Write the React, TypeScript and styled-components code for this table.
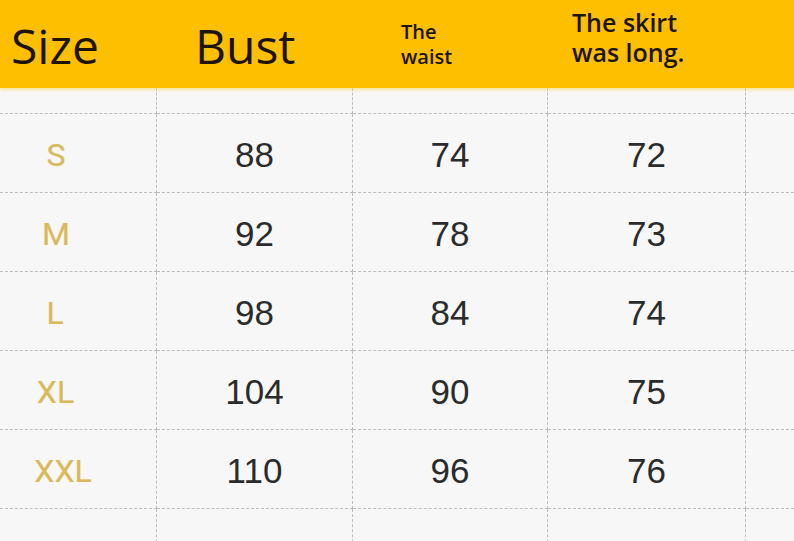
import styled, { createGlobalStyle } from 'styled-components';

const GlobalStyle = createGlobalStyle`
    html, body {
        margin: 0;
        padding: 0;
        background: #f7f7f7;
    }
    * {
        box-sizing: border-box;
    }
`;

const COLUMNS = '157px 196px 195px 198px 1fr';
const LINE = '1px dashed #bdbdbd';

const Page = styled.div`
    width: 794px;
    height: 541px;
    overflow: hidden;
    background: #f7f7f7;
`;

const Header = styled.div`
    display: grid;
    grid-template-columns: ${COLUMNS};
    height: 88px;
    background: #fdbf00;
    box-shadow: 0 2px 3px rgba(253, 214, 90, 0.6);
    position: relative;
    z-index: 1;
`;

const HeaderCell = styled.div<{ $indent: number; $top: number; $size: number; $lineHeight: number; $weight: number }>`
    padding-left: ${p => p.$indent}px;
    padding-top: ${p => p.$top}px;
    font-family: "Open Sans", "Noto Sans", sans-serif;
    font-size: ${p => p.$size}px;
    line-height: ${p => p.$lineHeight}px;
    font-weight: ${p => p.$weight};
    color: #1c1406;
    white-space: nowrap;
`;

const Line = styled.div`
    display: block;
`;

const Grid = styled.div`
    display: grid;
    grid-template-columns: ${COLUMNS};
    grid-auto-rows: 79px;
    grid-template-rows: 26px;
`;

const Cell = styled.div<{ $last?: boolean }>`
    display: flex;
    align-items: center;
    justify-content: center;
    border-bottom: ${LINE};
    border-right: ${p => (p.$last ? 'none' : LINE)};
    padding-top: 4px;
`;

const SizeCell = styled(Cell)<{ $shift: number }>`
    padding-right: ${p => 44 - p.$shift}px;
`;

const SizeLabel = styled.span`
    font-family: Roboto, "Liberation Sans", sans-serif;
    font-size: 32px;
    color: #d8b960;
    text-shadow: 0 0 1px rgba(240, 210, 110, 0.6);
`;

const Value = styled.span`
    font-family: "Liberation Sans", Arial, sans-serif;
    font-size: 35px;
    color: #2b2b2b;
`;

const rows = [
    { size: 'S', bust: 88, waist: 74, skirt: 72, shift: 0 },
    { size: 'M', bust: 92, waist: 78, skirt: 73, shift: 0 },
    { size: 'L', bust: 98, waist: 84, skirt: 74, shift: -2 },
    { size: 'XL', bust: 104, waist: 90, skirt: 75, shift: -1 },
    { size: 'XXL', bust: 110, waist: 96, skirt: 76, shift: 14 },
];

export default function App() {
    return (
        <Page>
            <GlobalStyle />
            <Header>
                <HeaderCell $indent={11} $top={22} $size={48} $lineHeight={48} $weight={400}>
                    Size
                </HeaderCell>
                <HeaderCell $indent={38} $top={22} $size={48} $lineHeight={48} $weight={400}>
                    Bust
                </HeaderCell>
                <HeaderCell $indent={48} $top={19} $size={20} $lineHeight={25} $weight={600}>
                    <Line>The</Line>
                    <Line>waist</Line>
                </HeaderCell>
                <HeaderCell $indent={24} $top={7} $size={25} $lineHeight={30} $weight={600}>
                    <Line>The skirt</Line>
                    <Line>was long.</Line>
                </HeaderCell>
                <div />
            </Header>
            <Grid>
                <Cell />
                <Cell />
                <Cell />
                <Cell />
                <Cell $last />
                {rows.map(r => (
                    <>
                        <SizeCell key={r.size + 's'} $shift={r.shift}>
                            <SizeLabel>{r.size}</SizeLabel>
                        </SizeCell>
                        <Cell key={r.size + 'b'}>
                            <Value>{r.bust}</Value>
                        </Cell>
                        <Cell key={r.size + 'w'}>
                            <Value>{r.waist}</Value>
                        </Cell>
                        <Cell key={r.size + 'k'}>
                            <Value>{r.skirt}</Value>
                        </Cell>
                        <Cell key={r.size + 'e'} $last />
                    </>
                ))}
                <Cell />
                <Cell />
                <Cell />
                <Cell />
                <Cell $last />
            </Grid>
        </Page>
    );
}
